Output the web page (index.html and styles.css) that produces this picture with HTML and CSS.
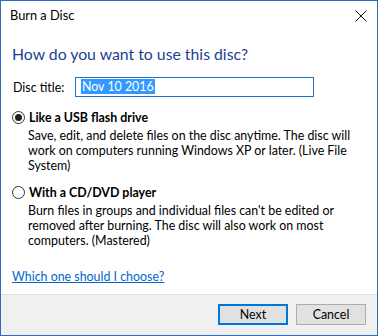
FILE: index.html
```html
<!DOCTYPE html>
<html lang="en">
<head>
  <meta charset="UTF-8" />
  <title>Burn a Disc</title>
  <link rel="stylesheet" href="styles.css">
</head>
<body>

  <div class="window">

    <div class="title-bar">
      <span class="title">Burn a Disc</span>
      <svg class="close" width="12" height="12" viewBox="0 0 12 12">
        <path d="M0.5 0.5 L11.5 11.5 M11.5 0.5 L0.5 11.5" stroke="#111" stroke-width="1" fill="none"/>
      </svg>
    </div>

    <div class="content">
      <h1>How do you want to use this disc?</h1>

      <div class="title-row">
        <label>Disc title:</label>
        <div class="text-box"><span class="selected">Nov 10 2016</span></div>
      </div>

      <div class="option">
        <div class="option-head">
          <span class="radio checked"></span>
          <span class="option-label">Like a USB flash drive</span>
        </div>
        <p class="option-desc">Save, edit, and delete files on the disc anytime. The disc will work on computers running Windows XP or later. (Live File System)</p>
      </div>

      <div class="option second">
        <div class="option-head">
          <span class="radio"></span>
          <span class="option-label">With a CD/DVD player</span>
        </div>
        <p class="option-desc">Burn files in groups and individual files can't be edited or removed after burning. The disc will also work on most computers. (Mastered)</p>
      </div>

      <a class="help-link" href="#">Which one should I choose?</a>
    </div>

    <div class="footer">
      <button class="btn default">Next</button>
      <button class="btn">Cancel</button>
    </div>

  </div>

</body>
</html>
```

FILE: styles.css
```css
* { box-sizing: border-box; }

body {
  margin: 0;
  font-family: "Segoe UI", Lato, "Liberation Sans", sans-serif;
  font-size: 12.4px;
  color: #000;
  background: #fff;
}

.window {
  width: 378px;
  height: 336px;
  border: 1px solid #2f6cbf;
  display: flex;
  flex-direction: column;
  background: #fff;
}

.title-bar {
  height: 30px;
  display: flex;
  align-items: flex-start;
  justify-content: space-between;
  padding: 7px 10px 0 9px;
  line-height: 15px;
}

.title {
  font-size: 12.8px;
}

.close {
  margin-top: 2px;
}

.content {
  flex: 1;
  padding: 0 11px 0 10px;
}

h1 {
  margin: 13px 0 0 1px;
  font-size: 15.8px;
  font-weight: normal;
  line-height: 20px;
  color: #1c3f94;
}

.title-row {
  display: flex;
  align-items: center;
  margin-top: 13px;
  height: 20px;
}

.title-row label {
  width: 64px;
  padding-left: 2px;
}

.text-box {
  width: 239px;
  height: 20px;
  border: 1px solid #1a73c8;
  padding: 1px 0 0 5px;
  line-height: 16px;
}

.selected {
  background: #3399ff;
  color: #fff;
  padding: 0 1px;
}

.option {
  margin-top: 13px;
}

.option.second {
  margin-top: 12px;
}

.option-head {
  display: flex;
  align-items: center;
  height: 15px;
}

.radio {
  width: 13px;
  height: 13px;
  border: 1px solid #333;
  border-radius: 50%;
  margin: 0 4px 0 1px;
  display: flex;
  align-items: center;
  justify-content: center;
}

.radio.checked::after {
  content: "";
  width: 7px;
  height: 7px;
  border-radius: 50%;
  background: #222;
}

.option-label {
  font-weight: bold;
  line-height: 15px;
}

.option-desc {
  margin: 3px 0 0 17px;
  line-height: 15px;
  width: 332px;
}

.help-link {
  display: block;
  margin-top: 21px;
  margin-left: 1px;
  color: #0066cc;
  line-height: 15px;
}

.footer {
  height: 41px;
  border-top: 1px solid #dfdfdf;
  background: #f0f0f0;
  display: flex;
  justify-content: flex-end;
  align-items: flex-start;
  gap: 8px;
  padding: 9px 11px 0 0;
}

.btn {
  width: 70px;
  height: 21px;
  font-family: inherit;
  font-size: 12.4px;
  background: #e1e1e1;
  border: 1px solid #adadad;
  padding: 0;
  color: #000;
}

.btn.default {
  border: 2px solid #0078d7;
}
```
